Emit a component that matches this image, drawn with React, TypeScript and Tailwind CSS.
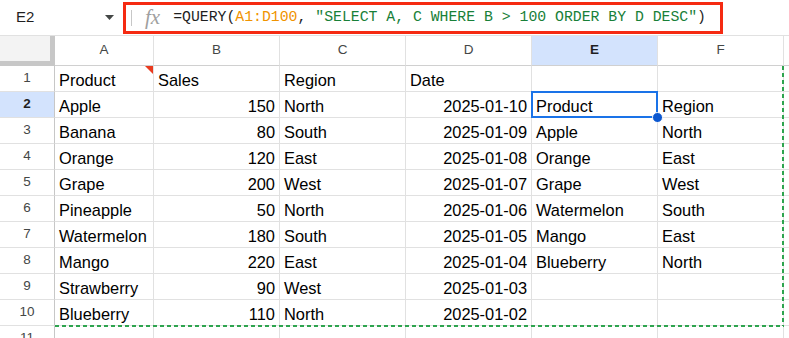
import React from 'react';

const colWidths = [99, 126, 126, 126, 126, 126];
const letters = ['A', 'B', 'C', 'D', 'E', 'F'];

type Cell = { v: string; right?: boolean };

const rows: Cell[][] = [
  [{ v: 'Product' }, { v: 'Sales' }, { v: 'Region' }, { v: 'Date' }, { v: '' }, { v: '' }],
  [{ v: 'Apple' }, { v: '150', right: true }, { v: 'North' }, { v: '2025-01-10', right: true }, { v: 'Product' }, { v: 'Region' }],
  [{ v: 'Banana' }, { v: '80', right: true }, { v: 'South' }, { v: '2025-01-09', right: true }, { v: 'Apple' }, { v: 'North' }],
  [{ v: 'Orange' }, { v: '120', right: true }, { v: 'East' }, { v: '2025-01-08', right: true }, { v: 'Orange' }, { v: 'East' }],
  [{ v: 'Grape' }, { v: '200', right: true }, { v: 'West' }, { v: '2025-01-07', right: true }, { v: 'Grape' }, { v: 'West' }],
  [{ v: 'Pineapple' }, { v: '50', right: true }, { v: 'North' }, { v: '2025-01-06', right: true }, { v: 'Watermelon' }, { v: 'South' }],
  [{ v: 'Watermelon' }, { v: '180', right: true }, { v: 'South' }, { v: '2025-01-05', right: true }, { v: 'Mango' }, { v: 'East' }],
  [{ v: 'Mango' }, { v: '220', right: true }, { v: 'East' }, { v: '2025-01-04', right: true }, { v: 'Blueberry' }, { v: 'North' }],
  [{ v: 'Strawberry' }, { v: '90', right: true }, { v: 'West' }, { v: '2025-01-03', right: true }, { v: '' }, { v: '' }],
  [{ v: 'Blueberry' }, { v: '110', right: true }, { v: 'North' }, { v: '2025-01-02', right: true }, { v: '' }, { v: '' }],
  [{ v: '' }, { v: '' }, { v: '' }, { v: '' }, { v: '' }, { v: '' }],
];

export default function App() {
  return (
    <div className="relative w-[789px] h-[338px] overflow-hidden bg-white font-['Liberation_Sans',Arial,sans-serif] text-black">
      {/* name box + formula bar */}
      <div className="flex items-center h-[36px] border-b border-[#e1e1e1]">
        <div className="flex items-center w-[123px] h-full pl-[16px] pr-[9px]">
          <span className="text-[15px] text-[#1f1f1f]">E2</span>
          <svg className="ml-auto w-[9px] h-[5px]" viewBox="0 0 9 5">
            <polygon points="0,0 9,0 4.5,5" fill="#444746" />
          </svg>
        </div>
        <div className="flex items-center w-[600px] h-[32px] border-[3px] border-[#f52a12]">
          <div className="ml-[5px] w-px h-[16px] bg-[#c7c7c7]"></div>
          <span className="ml-[13px] font-['Liberation_Serif',serif] italic text-[21px] leading-none text-[#a0a0a0]">fx</span>
          <span className="ml-[13px] font-['Liberation_Mono',monospace] text-[14.8px] whitespace-pre text-[#1f1f1f]">
            =QUERY(<span className="text-[#f09300]">A1:D100</span>, <span className="text-[#188038]">"SELECT A, C WHERE B &gt; 100 ORDER BY D DESC"</span>)
          </span>
        </div>
      </div>

      {/* column headers */}
      <div className="flex h-[30px]">
        <div className="w-[55px] shrink-0 bg-[#f3f3f3] border-r-[5px] border-b-[5px] border-[#c7c7c7]"></div>
        {letters.map((l, i) => (
          <div
            key={l}
            style={{ width: colWidths[i] }}
            className={`shrink-0 flex items-center justify-center border-r border-b border-r-[#e1e1e1] border-b-[#d0d0d0] text-[13.5px] ${
              l === 'E' ? 'bg-[#d3e3fd] font-bold text-[#1f1f1f]' : 'text-[#444746]'
            }`}
          >
            {l}
          </div>
        ))}
        <div className="flex-1 border-b border-[#d0d0d0]"></div>
      </div>

      {/* rows */}
      {rows.map((row, r) => (
        <div key={r} className="flex h-[26px]">
          <div
            className={`w-[55px] shrink-0 flex items-center justify-center border-r border-b border-r-[#c7c7c7] border-b-[#e1e1e1] text-[13.5px] ${
              r === 1 ? 'bg-[#d3e3fd] font-bold text-[#1f1f1f]' : 'text-[#444746]'
            }`}
          >
            {r + 1}
          </div>
          {row.map((c, i) => (
            <div
              key={i}
              style={{ width: colWidths[i] }}
              className={`relative shrink-0 border-r border-b border-[#e1e1e1] text-[16.4px] leading-[20px] pt-[4px] whitespace-nowrap ${
                c.right ? 'text-right pr-[4px]' : 'pl-[4px]'
              }`}
            >
              {c.v}
              {r === 0 && i === 0 && (
                <svg className="absolute top-0 right-0 w-[8px] h-[8px]" viewBox="0 0 8 8">
                  <polygon points="0,0 8,0 8,8" fill="#ea3a1e" />
                </svg>
              )}
              {r === 1 && i === 4 && (
                <>
                  <div className="absolute z-10 -top-px -left-px -right-px -bottom-px border-2 border-[#1a73e8]"></div>
                  <div className="absolute z-20 right-[-6px] bottom-[-6px] w-[11px] h-[11px] rounded-full bg-[#0b57d0] border border-white"></div>
                </>
              )}
            </div>
          ))}
          <div className="flex-1 border-b border-[#e1e1e1]"></div>
        </div>
      ))}

      {/* page break marker */}
      <div className="absolute z-10 left-[55px] top-[325px] w-[729px] h-[1.5px] bg-[repeating-linear-gradient(90deg,#2ea44f_0_4px,transparent_4px_7px)]"></div>
      <div className="absolute z-10 left-[782px] top-[66px] w-[1.5px] h-[260px] bg-[repeating-linear-gradient(180deg,#2ea44f_0_4px,transparent_4px_7px)]"></div>
    </div>
  );
}
